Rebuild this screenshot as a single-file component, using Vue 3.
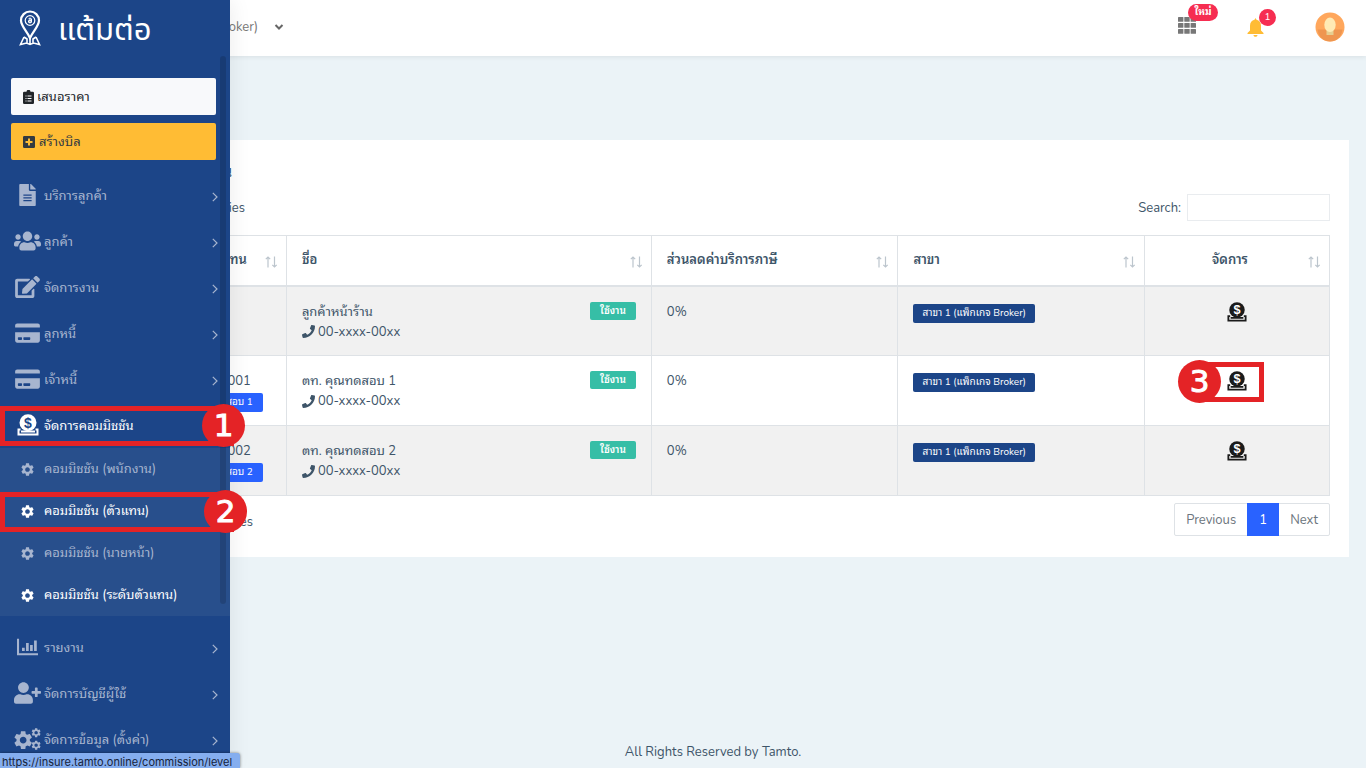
<script setup>
import { ref } from 'vue'

const search = ref('')

const icons = {
  file: { box: '0 0 384 512', d: 'M224 136V0H24C10.700 0 0 10.700 0 24v464c0 13.300 10.700 24 24 24h336c13.300 0 24-10.700 24-24V160H248c-13.200 0-24-10.800-24-24zM288 400H96v-26h192zm0-64H96v-26h192zm0-64H96v-26h192zM384 122v6H256V0h6c6.400 0 12.500 2.500 17 7l98 98c4.500 4.500 7 10.600 7 17z' },
  users: { box: '0 0 640 512', d: 'M96 224c35.300 0 64-28.700 64-64s-28.700-64-64-64-64 28.700-64 64 28.700 64 64 64zm448 0c35.300 0 64-28.700 64-64s-28.700-64-64-64-64 28.700-64 64 28.700 64 64 64zm32 32h-64c-17.600 0-33.500 7.100-45.100 18.600 40.300 22.100 68.900 62 75.100 109.400h66c17.700 0 32-14.300 32-32v-32c0-35.300-28.700-64-64-64zm-256 0c61.900 0 112-50.100 112-112S381.900 32 320 32 208 82.100 208 144s50.100 112 112 112zm76.800 32h-8.300c-20.800 10-43.900 16-68.500 16s-47.600-6-68.500-16h-8.300C179.600 288 128 339.600 128 403.200V432c0 26.500 21.500 48 48 48h288c26.500 0 48-21.500 48-48v-28.800c0-63.600-51.600-115.200-115.200-115.200zm-223.700-13.400C161.500 263.100 145.600 256 128 256H64c-35.300 0-64 28.700-64 64v32c0 17.700 14.300 32 32 32h65.900c6.300-47.400 34.900-87.300 75.200-109.400z' },
  edit: { box: '0 0 576 512', d: 'M402.600 83.200l90.200 90.200c3.800 3.800 3.800 10 0 13.800L274.400 405.600l-92.800 10.300c-12.400 1.400-22.900-9.100-21.500-21.500l10.300-92.800L388.800 83.200c3.800-3.800 10-3.800 13.800 0zm162-22.900l-48.800-48.800c-15.200-15.200-39.900-15.200-55.200 0l-35.400 35.400c-3.800 3.800-3.800 10 0 13.800l90.200 90.200c3.800 3.800 10 3.800 13.800 0l35.400-35.400c15.200-15.300 15.200-40 0-55.200zM384 346.200V448H64V128h229.800c3.200 0 6.200-1.300 8.500-3.500l40-40c7.600-7.600 2.200-20.500-8.500-20.500H48C21.500 64 0 85.500 0 112v352c0 26.500 21.500 48 48 48h352c26.500 0 48-21.500 48-48V306.200c0-10.700-12.900-16-20.500-8.500l-40 40c-2.200 2.300-3.500 5.300-3.500 8.500z' },
  card: { box: '0 0 576 512', d: 'M0 432c0 26.500 21.500 48 48 48h480c26.500 0 48-21.500 48-48V240H0v192zm192-68c0-6.600 5.400-12 12-12h136c6.600 0 12 5.400 12 12v40c0 6.600-5.400 12-12 12H204c-6.600 0-12-5.400-12-12v-40zm-128 0c0-6.600 5.400-12 12-12h72c6.600 0 12 5.400 12 12v40c0 6.600-5.400 12-12 12H76c-6.600 0-12-5.400-12-12v-40zM576 80v48H0V80c0-26.500 21.500-48 48-48h480c26.500 0 48 21.500 48 48z' },
  chart: { box: '0 0 512 400', d: 'M0 0h50v350h462v50H0zM122 220h66v80h-66zM220 100h66v200h-66zM318 150h66v150h-66zM416 40h66v260h-66z' },
  userPlus: { box: '0 0 640 512', d: 'M624 208h-64v-64c0-8.800-7.200-16-16-16h-32c-8.800 0-16 7.200-16 16v64h-64c-8.800 0-16 7.200-16 16v32c0 8.800 7.200 16 16 16h64v64c0 8.800 7.200 16 16 16h32c8.800 0 16-7.200 16-16v-64h64c8.800 0 16-7.200 16-16v-32c0-8.800-7.200-16-16-16zm-400 48c70.700 0 128-57.300 128-128S294.700 0 224 0 96 57.300 96 128s57.300 128 128 128zm89.600 32h-16.700c-22.200 10.200-46.900 16-72.900 16s-50.600-5.800-72.900-16h-16.700C60.200 288 0 348.200 0 422.400V464c0 26.500 21.500 48 48 48h352c26.500 0 48-21.500 48-48v-41.600c0-74.200-60.200-134.400-134.400-134.400z' },
}
const cog = 'M19.140 12.940c.04-.3.06-.61.06-.94 0-.32-.02-.64-.07-.94l2.030-1.580c.18-.14.23-.41.12-.61l-1.920-3.320c-.12-.22-.37-.29-.59-.22l-2.390.96c-.5-.38-1.030-.7-1.620-.94l-.36-2.540c-.04-.24-.24-.41-.48-.41h-3.840c-.24 0-.43.17-.47.41l-.36 2.540c-.59.24-1.130.57-1.620.94l-2.390-.96c-.22-.08-.47 0-.59.22L2.740 8.870c-.12.21-.08.47.12.61l2.030 1.580c-.05.3-.09.63-.09.94s.02.64.07.94l-2.030 1.580c-.18.14-.23.41-.12.61l1.920 3.320c.12.22.37.29.59.22l2.390-.96c.5.38 1.030.7 1.620.94l.36 2.540c.05.24.24.41.48.41h3.840c.24 0 .44-.17.47-.41l.36-2.540c.59-.24 1.130-.56 1.620-.94l2.390.96c.22.08.47 0 .59-.22l1.920-3.320c.12-.22.07-.47-.12-.61l-2.010-1.580zM12 15.600c-1.980 0-3.600-1.620-3.600-3.600s1.620-3.600 3.600-3.600 3.600 1.620 3.600 3.600-1.620 3.600-3.600 3.600z'
const phone = 'M493.400 24.600l-104-24c-11.300-2.600-22.900 3.300-27.500 13.900l-48 112c-4.200 9.800-1.400 21.300 6.900 28l60.600 49.600c-36 76.700-98.900 140.500-177.200 177.200l-49.600-60.600c-6.800-8.300-18.200-11.100-28-6.900l-112 48C3.900 366.500-2 378.100.6 389.400l24 104C27.100 504.200 36.700 512 48 512c256.100 0 464-207.500 464-464 0-11.200-7.700-20.900-18.600-23.400z'

const topMenu = [
  { label: 'บริการลูกค้า', icon: 'file', size: 'narrow' },
  { label: 'ลูกค้า', icon: 'users', size: 'wide' },
  { label: 'จัดการงาน', icon: 'edit', size: 'medium' },
  { label: 'ลูกหนี้', icon: 'card', size: 'medium' },
  { label: 'เจ้าหนี้', icon: 'card', size: 'medium' },
]
const subMenu = [
  { label: 'คอมมิชชัน (พนักงาน)' },
  { label: 'คอมมิชชัน (ตัวแทน)', active: true, step: 2 },
  { label: 'คอมมิชชัน (นายหน้า)' },
  { label: 'คอมมิชชัน (ระดับตัวแทน)', active: true },
]
const bottomMenu = [
  { label: 'รายงาน', icon: 'chart', size: 'small' },
  { label: 'จัดการบัญชีผู้ใช้', icon: 'userPlus', size: 'wide' },
  { label: 'จัดการข้อมูล (ตั้งค่า)', icon: 'cogs', size: 'wide' },
]
const columns = ['รหัสตัวแทน', 'ชื่อ', 'ส่วนลดค่าบริการภาษี', 'สาขา', 'จัดการ']
const rows = [
  { code: '', name: 'ลูกค้าหน้าร้าน' },
  { code: 'A001', tag: 'ทดสอบ 1', name: 'ตท. คุณทดสอบ 1', step: 3 },
  { code: 'A002', tag: 'ทดสอบ 2', name: 'ตท. คุณทดสอบ 2' },
]
</script>

<template>
  <div class="page">
    <header class="topbar">
      <button class="branch" type="button">
        <span class="branch-name">(แพ็กเกจ Broker)</span>
        <svg class="caret" viewBox="0 0 10 8"><path d="M1.500 2l3.500 3.500L8.500 2" /></svg>
      </button>
      <div class="tools">
        <button class="tool" type="button" aria-label="Apps">
          <svg class="grid-icon" viewBox="0 0 18 17">
            <template v-for="r in 3" :key="r">
              <rect v-for="c in 3" :key="c" :x="(c - 1) * 6.300" :y="(r - 1) * 6" width="5.400" height="4.800" rx="0.600" />
            </template>
          </svg>
          <span class="bubble bubble-new">ใหม่</span>
        </button>
        <button class="tool" type="button" aria-label="Notifications">
          <svg class="bell-icon" viewBox="0 0 16 19">
            <path d="M8 0l1 1.700c2.800.8 4.500 2.800 4.500 6v4.800L16 15v1H0v-1l2.500-2.500V7.700c0-3.200 1.700-5.200 4.500-6zM6 17h4c0 1-.8 1.800-2 1.800S6 18 6 17z" />
          </svg>
          <span class="bubble bubble-count">1</span>
        </button>
        <button class="tool" type="button" aria-label="Account">
          <svg class="avatar" viewBox="0 0 30 30">
            <circle cx="15" cy="15" r="14.500" fill="#ffa75c" />
            <path d="M2.500 17.500h25A14.500 14.500 0 0 1 22 27.500a14.500 14.500 0 0 1-14 0A14.500 14.500 0 0 1 2.500 17.500z" fill="#ef9650" />
            <path d="M11.500 18h7v5h-7z" fill="#e6cf91" />
            <ellipse cx="15" cy="12.800" rx="5.700" ry="7.300" fill="#ffeab4" />
          </svg>
        </button>
      </div>
    </header>

    <aside class="sidebar">
      <a class="brand" href="#">
        <svg class="brand-icon" viewBox="0 0 22 36">
          <path d="M11 28C8 21.500 2 16 2 10.500a9 9 0 0 1 18 0C20 16 14 21.500 11 28z" stroke-width="2.200" />
          <circle cx="11" cy="10.500" r="4.800" stroke-width="1.200" />
          <path d="M9.500 8.800h3v3.600h-3v-1.800h3M11 7.500v6" stroke-width="1" />
          <path d="M5 27l-3.500 7.500 6-1.500 3.500 1.500 3.500-1.500 6 1.500L17 27M5 27l3 2v3.500M17 27l-3 2v3.500M11 28v6" stroke-width="1.600" />
        </svg>
        <span class="brand-name">แต้มต่อ</span>
      </a>
      <div class="actions">
        <button class="action quote" type="button">
          <svg class="action-icon clip" viewBox="0 0 11 14">
            <path fill-rule="evenodd" d="M1.200 1.800H3.500a2 2 0 0 1 4 0H9.800Q11 1.800 11 3v9.800Q11 14 9.800 14H1.200Q0 14 0 12.800V3Q0 1.800 1.200 1.800zM2.500 5.500v1h1v-1zm2 0v1h4v-1zm-2 2.500v1h1V8zm2 0v1h4V8zm-2 2.500v1h1v-1zm2 0v1h4v-1z" />
          </svg>
          เสนอราคา
        </button>
        <button class="action bill" type="button">
          <svg class="action-icon plus" viewBox="0 0 12 12">
            <path fill-rule="evenodd" d="M1.300 0h9.400Q12 0 12 1.300v9.400Q12 12 10.700 12H1.300Q0 12 0 10.700V1.300Q0 0 1.300 0zM5 2.500V5H2.500v2H5v2.500h2V7h2.500V5H7V2.500z" />
          </svg>
          สร้างบิล
        </button>
      </div>
      <nav>
        <ul class="menu">
          <li v-for="item in topMenu" :key="item.label" class="item">
            <a class="link" href="#">
              <span class="icon-slot">
                <svg :class="['menu-icon', item.size]" :viewBox="icons[item.icon].box"><path :d="icons[item.icon].d" /></svg>
              </span>
              <span class="label">{{ item.label }}</span>
              <svg class="chevron" viewBox="0 0 6 10"><path d="M.8.800L5 5 .8 9.200" /></svg>
            </a>
          </li>
          <li class="item">
            <a class="link current" href="#">
              <span class="icon-slot">
                <svg class="coin" viewBox="0 0 22 22">
                  <path class="tray" d="M3.500 15.500H1.500v5h19v-5h-2M4 17.500h14" />
                  <circle cx="11" cy="8.700" r="8.500" />
                  <text class="dollar dollar-dark" x="11" y="13.500">$</text>
                </svg>
              </span>
              <span class="label">จัดการคอมมิชชัน</span>
            </a>
            <div class="frame frame-first"><span class="step">1</span></div>
          </li>
        </ul>
        <ul class="menu submenu">
          <li v-for="item in subMenu" :key="item.label" class="sub-item">
            <a :class="['link', { current: item.active }]" href="#">
              <span class="icon-slot"><svg class="cog" viewBox="2 2 20 20"><path :d="cog" /></svg></span>
              <span class="label">{{ item.label }}</span>
            </a>
            <div v-if="item.step" class="frame frame-second"><span class="step">{{ item.step }}</span></div>
          </li>
        </ul>
        <ul class="menu">
          <li v-for="item in bottomMenu" :key="item.label" class="item">
            <a class="link" href="#">
              <span class="icon-slot">
                <svg v-if="item.icon === 'cogs'" class="menu-icon wide" viewBox="0 0 27 22">
                  <path transform="translate(-2 1) scale(.93)" :d="cog" />
                  <path transform="translate(16.500 -1) scale(.47)" :d="cog" />
                  <path transform="translate(16.500 11.500) scale(.47)" :d="cog" />
                </svg>
                <svg v-else :class="['menu-icon', item.size]" :viewBox="icons[item.icon].box"><path :d="icons[item.icon].d" /></svg>
              </span>
              <span class="label">{{ item.label }}</span>
              <svg class="chevron" viewBox="0 0 6 10"><path d="M.8.800L5 5 .8 9.200" /></svg>
            </a>
          </li>
        </ul>
      </nav>
      <div class="scroll-thumb"></div>
    </aside>

    <main class="content">
      <section class="panel">
        <h1 class="title">ตัวแทน</h1>
        <div class="controls">
          <span class="length">entries</span>
          <label class="search">Search: <input v-model="search" type="search" /></label>
        </div>
        <table class="agents">
          <colgroup>
            <col class="col-code" /><col class="col-name" /><col class="col-rate" /><col class="col-branch" /><col />
          </colgroup>
          <thead>
            <tr>
              <th v-for="(col, i) in columns" :key="col" scope="col">
                <div :class="['head', { 'head-code': i === 0, 'head-center': i === 4 }]">
                  <span class="head-text">{{ col }}</span>
                  <svg class="sort" viewBox="0 0 13 12"><path d="M3 11.500V1M.8 3.200L3 1l2.200 2.200" /><path d="M9.500.500V11M7.300 8.800L9.500 11l2.200-2.200" /></svg>
                </div>
              </th>
            </tr>
          </thead>
          <tbody>
            <tr v-for="row in rows" :key="row.name">
              <td class="code-cell">
                <div class="code">{{ row.code }}</div>
                <span v-if="row.tag" class="badge tag">{{ row.tag }}</span>
              </td>
              <td>
                <div class="person">
                  <span>{{ row.name }}</span>
                  <span class="badge status">ใช้งาน</span>
                </div>
                <div class="phone"><svg class="phone-icon" viewBox="0 0 512 512"><path :d="phone" /></svg>00-xxxx-00xx</div>
              </td>
              <td>0%</td>
              <td><span class="badge branch-tag">สาขา 1 (แพ็กเกจ Broker)</span></td>
              <td class="manage">
                <div v-if="row.step" class="frame frame-third"><span class="step">{{ row.step }}</span></div>
                <button class="coin-button" type="button" aria-label="จัดการ">
                  <svg class="coin coin-small" viewBox="0 0 22 22">
                    <path class="tray" d="M3.500 15.500H1.500v5h19v-5h-2M4 17.500h14" />
                    <circle cx="11" cy="8.700" r="8.500" />
                    <text class="dollar" x="11" y="13.500">$</text>
                  </svg>
                </button>
              </td>
            </tr>
          </tbody>
        </table>
        <div class="table-foot">
          <span class="info">entries</span>
          <nav class="pager">
            <button type="button">Previous</button>
            <button class="on" type="button">1</button>
            <button type="button">Next</button>
          </nav>
        </div>
      </section>
      <footer class="footer">All Rights Reserved by Tamto.</footer>
    </main>
    <div class="status-bar">https://insure.tamto.online/commission/level</div>
  </div>
</template>

<style>
body {
  margin: 0;
  background: #ebf3f7;
}
</style>

<style scoped>
.page {
  position: relative;
  display: flex;
  flex-direction: column;
  min-height: 100vh;
  overflow: hidden;
  background: #ebf3f7;
  color: #3e5569;
  font-family: Nunito, Lato, "Noto Sans Thai Looped", Loma, Waree, Garuda, "Noto Serif Thai", Norasi, serif;
  font-size: 13px;
  line-height: 20px;
}
.page *,
.page *::before {
  box-sizing: border-box;
}
button,
input {
  font: inherit;
  color: inherit;
}
button {
  padding: 0;
  border: 0;
  background: none;
}
a {
  color: inherit;
  text-decoration: none;
}
svg {
  display: block;
  flex: none;
  fill: currentColor;
}
.topbar {
  display: flex;
  justify-content: space-between;
  align-items: center;
  height: 56px;
  padding: 0 21px 2px 60px;
  background: #fff;
  box-shadow: 0 1px 5px rgba(0, 0, 0, 0.08);
}
.branch {
  display: flex;
  align-items: center;
  gap: 16px;
  color: #777;
}
.branch-name {
  width: 198px;
  text-align: right;
}
.caret {
  width: 10px;
  height: 8px;
  fill: none;
  stroke: #666;
  stroke-width: 2;
}
.tools {
  display: flex;
  align-items: center;
  gap: 51px;
}
.tool {
  position: relative;
}
.grid-icon {
  width: 18px;
  height: 17px;
  margin-bottom: 4px;
  fill: #777;
}
.bell-icon {
  width: 17px;
  height: 19px;
  fill: #ffbc34;
}
.avatar {
  width: 30px;
  height: 30px;
}
.bubble {
  position: absolute;
  left: 10px;
  height: 17px;
  border-radius: 9px;
  background: #f62d51;
  color: #fff;
  font-size: 10px;
  line-height: 17px;
  text-align: center;
}
.bubble-new {
  top: -13px;
  width: 30px;
  font-weight: 700;
}
.bubble-count {
  top: -9px;
  left: 12px;
  width: 17px;
}

.sidebar {
  position: absolute;
  z-index: 2;
  top: 0;
  bottom: 0;
  left: 0;
  width: 230px;
  background: #1c4588;
  box-shadow: 1px 0 20px rgba(0, 0, 0, 0.08);
  color: #a7b5cf;
}
.brand {
  display: flex;
  align-items: center;
  gap: 17px;
  height: 56px;
  padding-left: 19px;
  color: #fff;
}
.brand-icon {
  width: 22px;
  height: 36px;
  fill: none;
  stroke: #fff;
}
.brand-name {
  font-family: Lato, "Noto Sans Thai", "Noto Sans", sans-serif;
  font-size: 31px;
  line-height: 40px;
}
.actions {
  display: flex;
  flex-direction: column;
  gap: 8px;
  padding: 22px 14px 12px 11px;
}
.action {
  display: flex;
  align-items: center;
  gap: 4px;
  height: 37px;
  padding: 0 12px;
  border-radius: 2px;
  color: #212529;
}
.quote {
  gap: 3px;
  background: #f8f9fb;
}
.bill {
  background: #ffbc34;
  color: #343a40;
}
.clip {
  width: 11px;
  height: 14px;
}
.plus {
  width: 12px;
  height: 12px;
}
.menu {
  margin: 0;
  padding: 0;
  list-style: none;
}
.submenu {
  margin-bottom: 8px;
  background: #284f8c;
}
.item,
.sub-item {
  position: relative;
}
.link {
  display: flex;
  align-items: center;
  height: 46px;
  padding: 0 12px 0 11px;
}
.sub-item .link {
  height: 42px;
}
.icon-slot {
  display: flex;
  justify-content: center;
  width: 33px;
}
.label {
  flex: 1;
  white-space: nowrap;
}
.item .label {
  padding-top: 2px;
}
.current {
  color: #fff;
}
.menu-icon {
  height: 22px;
}
.narrow {
  width: 17px;
}
.wide {
  width: 27px;
}
.medium {
  width: 25px;
}
.small {
  width: 21px;
}
.chevron {
  width: 6px;
  height: 10px;
  margin-top: 4px;
  fill: none;
  stroke: currentColor;
  stroke-width: 1.200;
}
.cog {
  width: 13px;
  height: 13px;
}
.coin {
  width: 22px;
  height: 22px;
}
.coin-small {
  width: 20px;
  height: 20px;
}
.tray {
  fill: none;
  stroke: currentColor;
  stroke-width: 2;
}
.dollar {
  fill: #fff;
  font: 700 14px "Liberation Sans", sans-serif;
  text-anchor: middle;
}
.dollar-dark {
  fill: #1c4588;
}
.scroll-thumb {
  position: absolute;
  top: 56px;
  left: 220px;
  width: 6px;
  height: 548px;
  border-radius: 3px;
  background: rgba(0, 0, 0, 0.14);
}

.frame {
  position: absolute;
  height: 40px;
  border: 5px solid #e42326;
  pointer-events: none;
}
.frame-first,
.frame-second {
  z-index: 2;
  top: 4px;
  left: 0;
  width: 234px;
}
.frame-second {
  top: 2px;
}
.frame-third {
  top: 6px;
  left: 55px;
  width: 64px;
}
.step {
  position: absolute;
  top: -7px;
  left: 197px;
  width: 43px;
  height: 43px;
  border-radius: 50%;
  background: #e42326;
  color: #fff;
  font: 31px/43px "DejaVu Sans", sans-serif;
  text-align: center;
  -webkit-text-stroke: 1px #fff;
}
.frame-second .step {
  left: 199px;
}
.frame-third .step {
  left: -27px;
}

.content {
  display: flex;
  flex: 1;
  flex-direction: column;
  padding: 84px 17px 6px 77px;
}
.panel {
  padding: 22px 19px 21px;
  background: #fff;
}
.title {
  width: 136px;
  margin: 0 0 12px;
  font-size: 15px;
  font-weight: 700;
  line-height: 20px;
  text-align: right;
}
.controls {
  display: flex;
  justify-content: space-between;
  align-items: center;
  margin-bottom: 14px;
}
.length {
  width: 149px;
  text-align: right;
}
.search {
  display: flex;
  align-items: center;
  gap: 6px;
}
.search input {
  width: 143px;
  height: 27px;
  padding: 0 8px;
  border: 1px solid #e9ecef;
  background: #fff;
}
.agents {
  width: 100%;
  table-layout: fixed;
  border-collapse: collapse;
}
.col-code {
  width: 15.400%;
}
.col-name {
  width: 29.600%;
}
.col-rate,
.col-branch {
  width: 20%;
}
th,
td {
  border: 1px solid #dee2e6;
  text-align: left;
  vertical-align: top;
}
th {
  height: 50px;
  padding: 0 8px 0 15px;
  border-bottom-width: 2px;
  vertical-align: middle;
  font-weight: 600;
}
.head {
  display: flex;
  justify-content: space-between;
  align-items: center;
}
.head-text {
  flex: 1;
}
.head-code .head-text {
  padding-right: 18px;
  text-align: right;
}
.head-center .head-text {
  padding-right: 8px;
  text-align: center;
}
.sort {
  width: 13px;
  height: 12px;
  margin-top: 4px;
  fill: none;
  stroke: #bcc5cd;
  stroke-width: 1.200;
}
td {
  height: 70px;
  padding: 15px 15px 0;
}
tbody tr:nth-child(odd) {
  background: #f1f1f1;
}
.code-cell {
  padding-right: 23px;
  text-align: right;
}
.code {
  padding-right: 12px;
}
.badge {
  display: inline-block;
  height: 18px;
  padding: 0 10px;
  border-radius: 2px;
  color: #fff;
  font-size: 10px;
  line-height: 18px;
  white-space: nowrap;
}
.tag {
  height: 19px;
  background: #2962ff;
}
.status {
  background: #36bea6;
  font-weight: 600;
}
.branch-tag {
  height: 19px;
  margin-top: 1px;
  padding: 0 9px;
  background: #1c4588;
}
.person {
  display: flex;
  justify-content: space-between;
}
.phone {
  display: flex;
  align-items: center;
  gap: 3px;
}
.phone-icon {
  width: 13px;
  height: 13px;
}
.manage {
  position: relative;
}
.coin-button {
  display: block;
  position: relative;
  margin: 0 auto;
  color: #1b1b1b;
}
.table-foot {
  display: flex;
  justify-content: space-between;
  align-items: center;
  margin-top: 7px;
}
.info {
  width: 157px;
  padding-top: 4px;
  text-align: right;
}
.pager {
  display: flex;
  height: 33px;
  border: 1px solid #dee2e6;
  border-radius: 2px;
  color: #6c757d;
}
.pager button {
  padding: 0 11px;
}
.pager .on {
  width: 32px;
  margin: -1px 0;
  background: #2962ff;
  color: #fff;
}
.footer {
  margin-top: auto;
  text-align: center;
}
.status-bar {
  position: absolute;
  z-index: 4;
  bottom: 0;
  left: 0;
  width: 240px;
  height: 15px;
  padding: 2px 2px 0;
  overflow: hidden;
  border-radius: 0 3px 0 0;
  background: #85aeef;
  box-shadow: 0 0 3px rgba(0, 0, 0, 0.5);
  color: #15233b;
  font: 11px/15px Inter, sans-serif;
  white-space: nowrap;
}
</style>
